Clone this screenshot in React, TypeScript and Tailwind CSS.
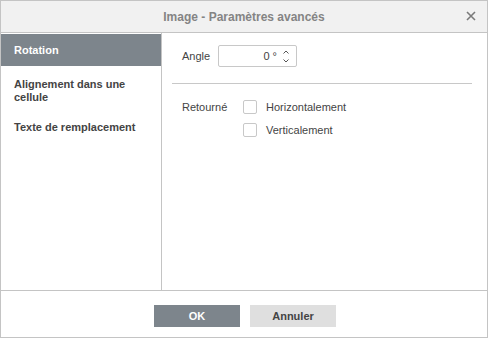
export default function App() {
  return (
    <div className="w-[488px] h-[338px] border border-[#c4c4c4] bg-white flex flex-col font-['Liberation_Sans',Arial,sans-serif] text-[#444] text-[11px]">
      <div className="relative h-[32px] shrink-0 bg-[#f1f1f1] border-b border-[#c4c4c4] flex items-center justify-center">
        <span className="text-[12px] font-bold text-[#848484]">Image - Paramètres avancés</span>
        <svg className="absolute right-[11px] top-[10px]" width="10" height="10" viewBox="0 0 10 10">
          <path d="M1 1 L9 9 M9 1 L1 9" stroke="#7a7a7a" strokeWidth="1.6" />
        </svg>
      </div>

      <div className="flex flex-1 min-h-0">
        <div className="w-[161px] shrink-0 border-r border-[#c4c4c4] pt-px font-bold">
          <div className="h-[32px] bg-[#7d858c] text-white flex items-center pl-[13px]">Rotation</div>
          <div className="pl-[13px] pt-[12px] leading-[13px] pr-4">Alignement dans une cellule</div>
          <div className="pl-[13px] pt-[17px] leading-[13px]">Texte de remplacement</div>
        </div>

        <div className="flex-1 pt-[12px]">
          <div className="flex items-center pl-[20px]">
            <span className="w-[36px]">Angle</span>
            <div className="relative w-[79px] h-[22px] border border-[#c8c8c8] rounded-[2px] flex items-center justify-end pr-[19px]">
              <span className="text-[11px]">0 °</span>
              <svg className="absolute right-[6px] top-[3px]" width="8" height="15" viewBox="0 0 8 15">
                <path d="M1.5 4.5 L4 2 L6.5 4.5 M1.5 10.5 L4 13 L6.5 10.5" fill="none" stroke="#555" strokeWidth="1" />
              </svg>
            </div>
          </div>

          <div className="ml-[10px] mr-[15px] mt-[16px] border-t border-[#c8c8c8]" />

          <div className="flex pl-[20px] pt-[16px]">
            <span className="w-[61px] leading-[14px]">Retourné</span>
            <div className="flex flex-col gap-[9px]">
              <label className="flex items-center gap-[9px] leading-[14px]">
                <span className="w-[14px] h-[14px] border border-[#c8c8c8] rounded-[2px]" />
                Horizontalement
              </label>
              <label className="flex items-center gap-[9px] leading-[14px]">
                <span className="w-[14px] h-[14px] border border-[#c8c8c8] rounded-[2px]" />
                Verticalement
              </label>
            </div>
          </div>
        </div>
      </div>

      <div className="h-[47px] shrink-0 border-t border-[#c4c4c4] flex justify-center gap-[10px] pt-[14px] pl-[2px]">
        <button className="w-[86px] h-[22px] bg-[#7d858c] text-white font-bold text-[11px]">OK</button>
        <button className="w-[86px] h-[22px] bg-[#dfdfdf] text-[#444] font-bold text-[11px]">Annuler</button>
      </div>
    </div>
  );
}
